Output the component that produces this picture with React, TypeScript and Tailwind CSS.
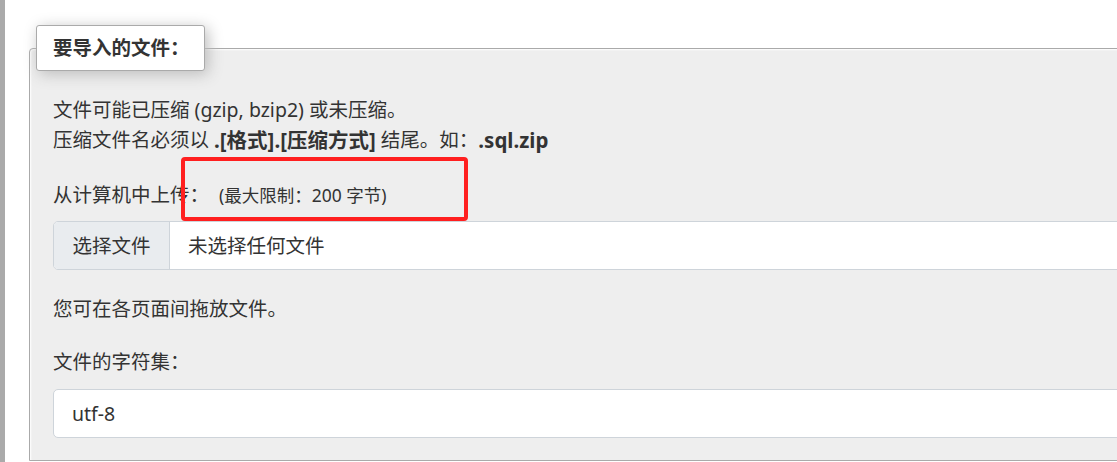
import React from "react";

export default function App() {
  const font = { fontFamily: '"Noto Sans", "Noto Sans CJK SC", sans-serif' } as React.CSSProperties;
  return (
    <div className="relative flex h-[462px] w-[1117px] overflow-hidden bg-white text-[#333]" style={font}>
      <div className="h-full w-[5px] shrink-0 bg-[#aaaaaa]" />
      <div className="shrink-0 pl-[24px] pt-[25px]">
        <div className="relative z-10 ml-[7px] flex h-[46px] w-[169px] items-center rounded-[3px] border border-[#aaa] bg-white pl-[16px] text-[19.5px] font-bold text-[#333] shadow-[3px_3px_15px_#bbb]">
          要导入的文件：
        </div>
        <div className="-mt-[23px] w-[1150px] rounded-t-[4px] border border-[#aaa] bg-[#eeeeee] pb-[22px] pl-[23px] pt-[46px] shadow-[inset_1px_1px_2px_#fff]">
          <div className="flex h-[30px] items-center whitespace-pre text-[19.5px]">
            <span>文件可能已压缩 (gzip, bzip2) 或未压缩。</span>
          </div>
          <div className="flex h-[30px] items-center whitespace-pre text-[19.5px]">
            <span>压缩文件名必须以 </span>
            <span className="text-[20.5px] font-bold">.[格式].[压缩方式]</span>
            <span> 结尾。如：</span>
            <span className="text-[20.5px] font-bold">.sql.zip</span>
          </div>
          <div className="mt-[28px] flex h-[24px] items-center text-[19.5px]">
            <span>从计算机中上传：</span>
            <span className="ml-[10px] text-[17.5px]">(最大限制：200 字节)</span>
          </div>
          <div className="mt-[14px] flex h-[49px] w-[1100px] overflow-hidden rounded-l-[5px] border border-[#ced4da] bg-white text-[19.5px]">
            <div className="flex w-[116px] items-center justify-center border-r border-[#ced4da] bg-[#e9ecef]">选择文件</div>
            <div className="flex items-center pl-[18px]">未选择任何文件</div>
          </div>
          <div className="mt-[27px] flex h-[24px] items-center text-[19.5px]">您可在各页面间拖放文件。</div>
          <div className="mt-[29px] flex h-[24px] items-center text-[19.5px]">文件的字符集：</div>
          <div className="mt-[15px] flex h-[49px] w-[1100px] items-center rounded-l-[5px] border border-[#ced4da] bg-white pl-[18px] text-[19.5px]">
            utf-8
          </div>
        </div>
      </div>
      <div className="pointer-events-none absolute left-[181px] top-[157px] h-[64px] w-[287px] rounded-[4px] border-[4px] border-[#ff1f1f]" />
    </div>
  );
}
